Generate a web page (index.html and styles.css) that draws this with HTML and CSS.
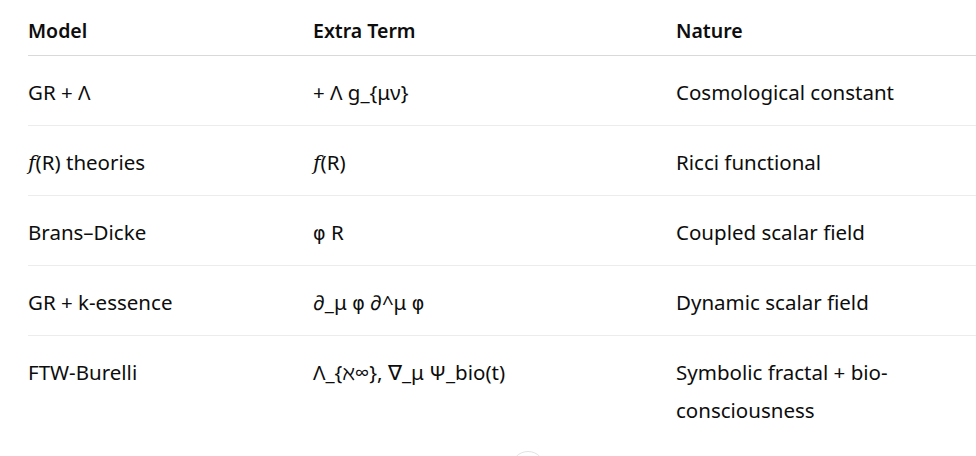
FILE: index.html
```html
<!DOCTYPE html>
<html>
<head>
<meta charset="utf-8">
<link rel="stylesheet" href="styles.css">
</head>
<body>
<div class="wrap">
  <table class="tbl">
    <colgroup>
      <col class="c1"><col class="c2"><col class="c3">
    </colgroup>
    <thead>
      <tr><th>Model</th><th>Extra Term</th><th>Nature</th></tr>
    </thead>
    <tbody>
      <tr><td>GR + Λ</td><td>+ Λ g_{μν}</td><td>Cosmological constant</td></tr>
      <tr><td><i>f</i>(R) theories</td><td><i>f</i>(R)</td><td>Ricci functional</td></tr>
      <tr><td>Brans–Dicke</td><td><span class="phi">φ</span> R</td><td>Coupled scalar field</td></tr>
      <tr><td>GR + k-essence</td><td>∂_μ <span class="phi">φ</span> ∂^μ <span class="phi">φ</span></td><td>Dynamic scalar field</td></tr>
      <tr><td>FTW-Burelli</td><td>Λ_{ℵ∞}, ∇_μ Ψ_bio(t)</td><td>Symbolic fractal + bio-consciousness</td></tr>
    </tbody>
  </table>
</div>
<div class="scroll-btn"></div>
</body>
</html>
```

FILE: styles.css
```css
html, body {
  margin: 0;
  padding: 0;
  background: #ffffff;
  overflow: hidden;
  width: 976px;
  height: 456px;
}
body {
  font-family: "Noto Sans", "Open Sans", sans-serif;
  font-size: 20.5px;
  color: #0d0d0d;
  position: relative;
}
.wrap {
  padding-left: 28px;
}
.tbl {
  border-collapse: collapse;
  width: 948px;
  table-layout: fixed;
}
.c1 { width: 285px; }
.c2 { width: 363px; }
.c3 { width: 300px; }
th {
  text-align: left;
  font-weight: 600;
  font-size: 19.5px;
  line-height: 38px;
  height: 38px;
  padding: 12px 0 5px 0;
  border-bottom: 1px solid #d9d9d9;
}
td {
  line-height: 38px;
  padding: 17px 0 14px 0;
  border-bottom: 1px solid #ececec;
  vertical-align: top;
}
tbody tr:last-child td {
  border-bottom: none;
}
i {
  font-family: "DejaVu Serif", serif;
  font-style: italic;
  line-height: 1;
}
.phi {
  font-family: "DejaVu Sans", sans-serif;
  font-size: 19px;
  line-height: 1;
}
.scroll-btn {
  position: absolute;
  left: 511px;
  top: 451px;
  width: 32px;
  height: 32px;
  border-radius: 50%;
  border: 1px solid #e3e3e3;
  background: #fff;
}
```
